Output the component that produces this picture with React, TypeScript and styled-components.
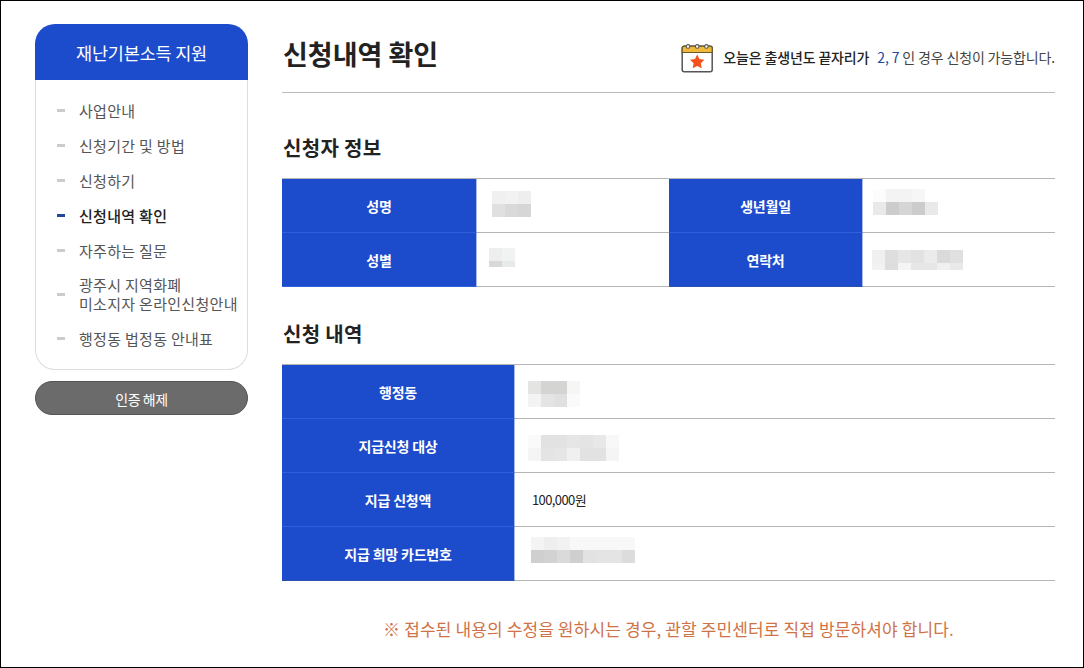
import React from 'react';
import styled, { createGlobalStyle } from 'styled-components';

const GlobalStyle = createGlobalStyle`
  html, body {
    margin: 0;
    padding: 0;
    background: #fff;
  }
  body {
    font-family: "Noto Sans CJK KR", "Noto Sans", sans-serif;
    color: #222;
  }
  ul {
    list-style: none;
    margin: 0;
    padding: 0;
  }
`;

const Frame = styled.div`
  box-sizing: border-box;
  width: 1084px;
  height: 668px;
  border: 1px solid #000;
  padding: 23px 28px 0 34px;
  display: flex;
  gap: 34px;
  overflow: hidden;
`;

const Sidebar = styled.aside`
  width: 213px;
  flex: none;
`;

const SideTitle = styled.div`
  height: 56px;
  background: #1c4bcb;
  border-radius: 20px 20px 0 0;
  color: #fff;
  font-size: 17.5px;
  letter-spacing: -0.2px;
  display: flex;
  align-items: center;
  justify-content: center;
`;

const SideMenu = styled.ul`
  box-sizing: border-box;
  height: 290px;
  border: 1px solid #ddd;
  border-top: 0;
  border-radius: 0 0 20px 20px;
  padding-top: 13px;
  display: flex;
  flex-direction: column;
`;

const SideItem = styled.li<{ $active?: boolean; $tall?: boolean }>`
  min-height: ${p => (p.$tall ? '53px' : '35px')};
  padding-left: 21px;
  display: flex;
  align-items: center;
  gap: 14px;
  font-size: 15px;
  line-height: 19px;
  letter-spacing: 0.3px;
  white-space: nowrap;
  color: ${p => (p.$active ? '#222' : '#555')};
  font-weight: ${p => (p.$active ? 500 : 400)};
  &::before {
    content: '';
    flex: none;
    width: 8px;
    height: 3px;
    background: ${p => (p.$active ? '#23479f' : '#ccc')};
  }
`;

const SideItemLines = styled.span`
  padding-bottom: 2px;
`;

const LogoutButton = styled.button`
  display: block;
  box-sizing: border-box;
  width: 100%;
  height: 34px;
  margin-top: 11px;
  padding: 2px 0 0;
  border: 1px solid #555;
  border-radius: 17px;
  background: #6b6b6b;
  color: #fff;
  font-family: inherit;
  font-size: 14px;
  letter-spacing: -0.4px;
`;

const Main = styled.main`
  width: 773px;
  flex: none;
`;

const PageHead = styled.header`
  box-sizing: border-box;
  height: 69px;
  border-bottom: 1px solid #bbb;
  display: flex;
  justify-content: space-between;
  align-items: flex-start;
`;

const PageTitle = styled.h1`
  margin: 10px 0 0 1px;
  font-size: 27px;
  line-height: 40px;
  font-weight: 700;
  letter-spacing: 0;
  color: #222;
`;

const DateNotice = styled.div`
  display: flex;
  align-items: center;
  gap: 9px;
  margin-top: 19px;
  font-size: 14px;
  letter-spacing: -0.15px;
  white-space: nowrap;
  color: #444;
`;

const NoticeText = styled.span`
  padding-bottom: 3px;
`;

const NoticeStrong = styled.strong`
  font-weight: 500;
  color: #222;
  margin-right: 8px;
`;

const NoticeDigits = styled.span`
  color: #23479f;
`;

const SectionTitle = styled.h2<{ $top: number }>`
  margin: ${p => p.$top}px 0 16px 1px;
  font-size: 20px;
  line-height: 28px;
  font-weight: 700;
  letter-spacing: 0.3px;
  color: #222;
`;

const InfoGrid = styled.div<{ $columns: string }>`
  display: grid;
  grid-template-columns: ${p => p.$columns};
  border-top: 1px solid #b5b5b5;
`;

const HeadCell = styled.div`
  box-sizing: border-box;
  height: 54px;
  background: #1c4bcb;
  border-bottom: 1px solid #2f5fdc;
  border-right: 1px solid #a9b8e4;
  color: #fff;
  font-size: 14px;
  font-weight: 700;
  letter-spacing: -0.2px;
  display: flex;
  align-items: center;
  justify-content: center;
  &:nth-last-child(-n + 2) {
    border-bottom-color: #2a4faf;
  }
`;

const ValueCell = styled.div<{ $inset?: number }>`
  box-sizing: border-box;
  height: 54px;
  border-bottom: 1px solid #b5b5b5;
  padding-left: ${p => p.$inset ?? 15}px;
  font-size: 13px;
  letter-spacing: -0.6px;
  color: #222;
  display: flex;
  align-items: center;
`;

const Mosaic = styled.div<{ $columns: number; $rows: string; $shift: number }>`
  display: grid;
  grid-template-columns: repeat(${p => p.$columns}, 13px);
  grid-template-rows: ${p => p.$rows};
  margin: ${p => Math.max(p.$shift, 0) * 2}px 0 ${p => Math.max(-p.$shift, 0) * 2}px;
`;

const MosaicCell = styled.span<{ $shade: string }>`
  background: ${p => p.$shade};
`;

const ClosingNote = styled.p`
  margin: 36px 0 0;
  text-align: center;
  font-size: 17px;
  line-height: 24px;
  letter-spacing: 0.13px;
  color: #cf7347;
`;

function Blur({ rows, shift = 0, heights = '13px 13px' }: { rows: string[][]; shift?: number; heights?: string }) {
  return (
    <Mosaic $columns={rows[0].length} $rows={heights} $shift={shift}>
      {rows.flat().map((shade, i) => (
        <MosaicCell key={i} $shade={shade} />
      ))}
    </Mosaic>
  );
}

function CalendarIcon() {
  return (
    <svg width="33" height="30" viewBox="0 0 33 30" fill="none">
      <rect x="1.2" y="3.2" width="30" height="25.6" rx="2" fill="#fff" stroke="#555" strokeWidth="1.5" />
      <path d="M1.2 9.5V5.2a2 2 0 0 1 2-2h26a2 2 0 0 1 2 2v4.3z" fill="#f0b93a" stroke="#6b5a2a" strokeWidth="1.2" />
      <circle cx="7" cy="3.4" r="1.8" fill="#fff" stroke="#555" strokeWidth="1.1" />
      <circle cx="16.2" cy="3.4" r="1.8" fill="#fff" stroke="#555" strokeWidth="1.1" />
      <circle cx="25.4" cy="3.4" r="1.8" fill="#fff" stroke="#555" strokeWidth="1.1" />
      <path
        d="M16.2 11.5l2.2 4.6 5 .7-3.6 3.5.9 5-4.5-2.4-4.5 2.4.9-5-3.6-3.5 5-.7z"
        fill="#f4511e"
      />
    </svg>
  );
}

const menu = ['사업안내', '신청기간 및 방법', '신청하기', '신청내역 확인', '자주하는 질문'];

export default function App() {
  return (
    <Frame>
      <GlobalStyle />
      <Sidebar>
        <SideTitle>재난기본소득 지원</SideTitle>
        <SideMenu>
          {menu.map(label => (
            <SideItem key={label} $active={label === '신청내역 확인'}>
              {label}
            </SideItem>
          ))}
          <SideItem $tall>
            <SideItemLines>
              광주시 지역화폐
              <br />
              미소지자 온라인신청안내
            </SideItemLines>
          </SideItem>
          <SideItem>행정동 법정동 안내표</SideItem>
        </SideMenu>
        <LogoutButton>인증 해제</LogoutButton>
      </Sidebar>

      <Main>
        <PageHead>
          <PageTitle>신청내역 확인</PageTitle>
          <DateNotice>
            <CalendarIcon />
            <NoticeText>
              <NoticeStrong>오늘은 출생년도 끝자리가</NoticeStrong>
              <NoticeDigits>2, 7</NoticeDigits> 인 경우 신청이 가능합니다.
            </NoticeText>
          </DateNotice>
        </PageHead>

        <SectionTitle $top={41}>신청자 정보</SectionTitle>
        <InfoGrid $columns="195px 192px 194px 192px">
          <HeadCell>성명</HeadCell>
          <ValueCell>
            <Blur
              shift={-1.5}
              rows={[
                ['#f0f0f0', '#f2f2f2', '#eeeeee'],
                ['#e0e0e0', '#d9d9d9', '#d6d6d6'],
              ]}
            />
          </ValueCell>
          <HeadCell>생년월일</HeadCell>
          <ValueCell $inset={10}>
            <Blur
              shift={-3.5}
              rows={[
                ['#fcfcfc', '#f3f3f3', '#f3f3f3', '#f6f6f6', '#ffffff'],
                ['#e9e9e9', '#cccccc', '#d5d5d5', '#cccccc', '#e9e9e9'],
              ]}
            />
          </ValueCell>
          <HeadCell>성별</HeadCell>
          <ValueCell $inset={12}>
            <Blur
              shift={-2}
              heights="13px 6px"
              rows={[
                ['#eeeeee', '#f1f3f3'],
                ['#d8d8d8', '#e6eaea'],
              ]}
            />
          </ValueCell>
          <HeadCell>연락처</HeadCell>
          <ValueCell $inset={9}>
            <Blur
              heights="13px 7px"
              rows={[
                ['#f0f0f0', '#dedede', '#e6e6e6', '#e2e2e2', '#ebebeb', '#dadada', '#e0e0e0'],
                ['#f2f2f2', '#dddddd', '#f5f5f5', '#e6e6e6', '#e6e6e6', '#f0f0f0', '#e9e9e9'],
              ]}
            />
          </ValueCell>
        </InfoGrid>

        <SectionTitle $top={33}>신청 내역</SectionTitle>
        <InfoGrid $columns="233px 540px">
          <HeadCell>행정동</HeadCell>
          <ValueCell $inset={13}>
            <Blur
              shift={2.5}
              rows={[
                ['#e4e4e2', '#d4d4d2', '#d4d4d2', '#f6f6f6'],
                ['#f3f3f3', '#e4e4e4', '#e0e0e0', '#fafafa'],
              ]}
            />
          </ValueCell>
          <HeadCell>지급신청 대상</HeadCell>
          <ValueCell $inset={13}>
            <Blur
              shift={2.5}
              rows={[
                ['#fafafa', '#e2e2e2', '#e2e2e2', '#e6e6e6', '#e4e4e4', '#e8e8e8', '#f8f8f8'],
                ['#f5f5f5', '#e4e4e4', '#e6e6e6', '#f0f0f0', '#e2e2e2', '#e2e2e2', '#f5f5f5'],
              ]}
            />
          </ValueCell>
          <HeadCell>지급 신청액</HeadCell>
          <ValueCell $inset={17}>100,000원</ValueCell>
          <HeadCell>지급 희망 카드번호</HeadCell>
          <ValueCell $inset={16}>
            <Blur
              shift={-3.5}
              rows={[
                ['#f4f4f4', '#eeeeee', '#f2f2f2', '#f8f8f8', '#f8f8f8', '#f8f8f8', '#f8f8f8', '#f8f8f8'],
                ['#cfcfcf', '#d2d2d2', '#dadada', '#cfcfcf', '#e2e2e2', '#e4e4e4', '#e4e4e4', '#dcdcdc'],
              ]}
            />
          </ValueCell>
        </InfoGrid>

        <ClosingNote>※ 접수된 내용의 수정을 원하시는 경우, 관할 주민센터로 직접 방문하셔야 합니다.</ClosingNote>
      </Main>
    </Frame>
  );
}
